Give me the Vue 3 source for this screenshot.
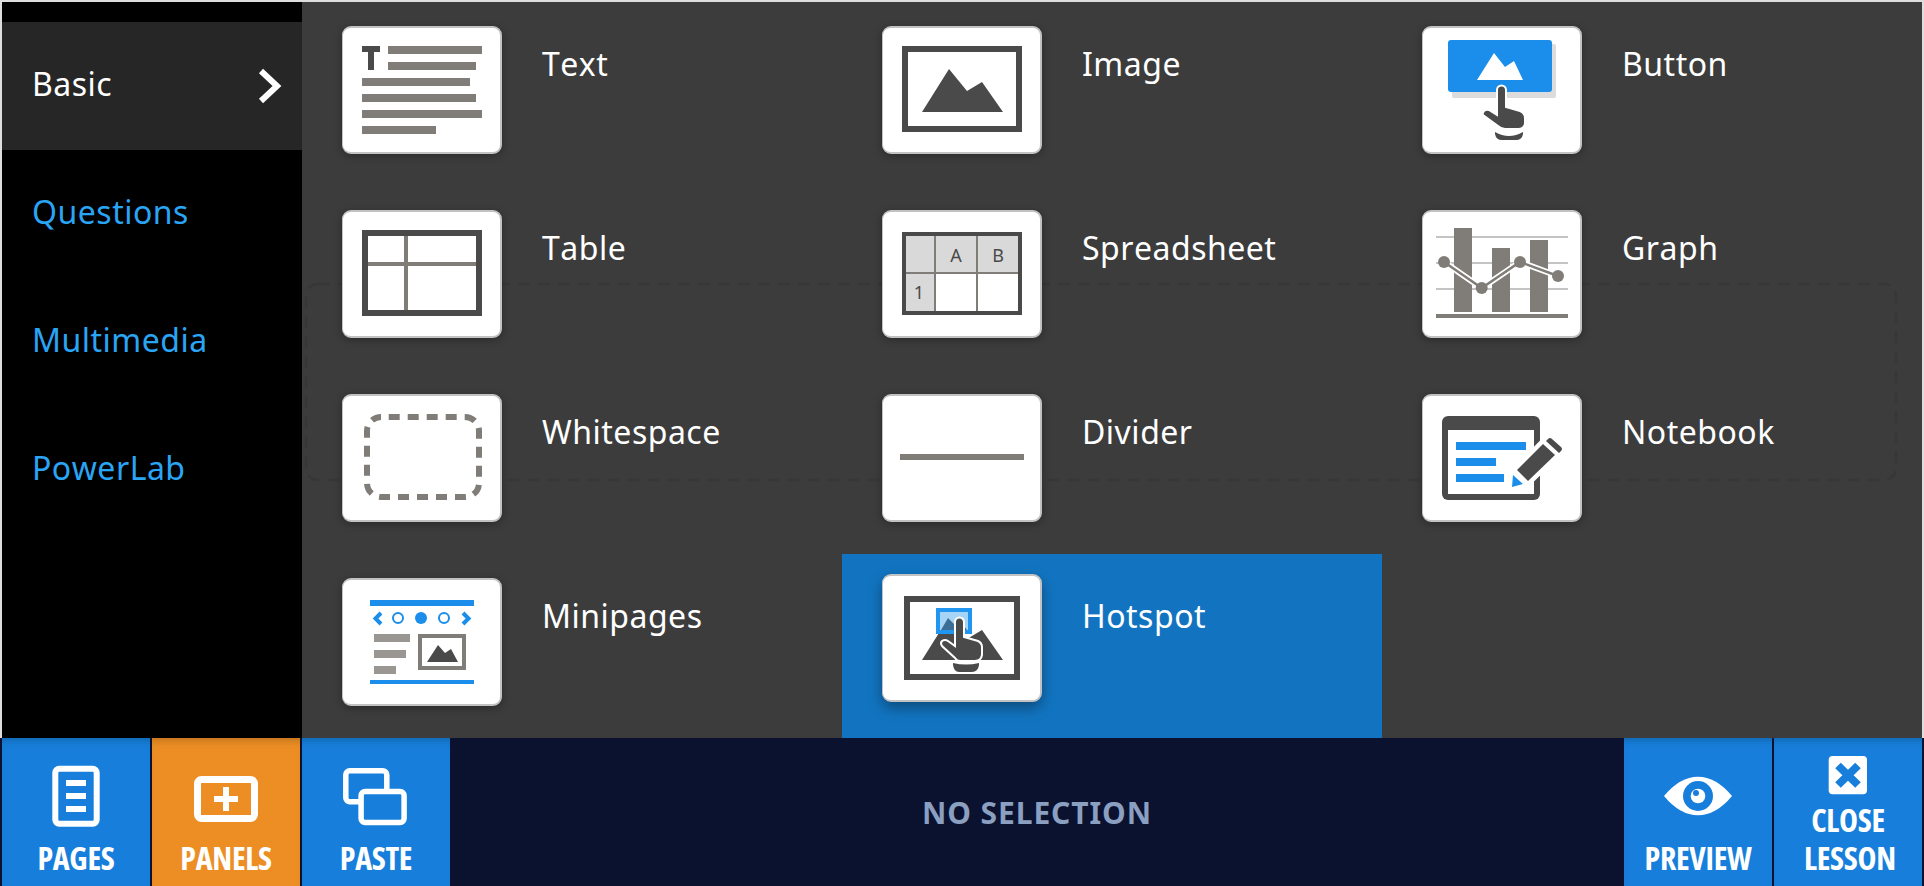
<script setup>
const sideItems = [
  { name: 'Basic', active: true },
  { name: 'Questions' },
  { name: 'Multimedia' },
  { name: 'PowerLab' },
]
</script>

<template>
  <div class="app">
    <div class="main">
      <aside class="sidebar">
        <div v-for="item in sideItems" :key="item.name" class="side-item" :class="{ active: item.active }">
          <span>{{ item.name }}</span>
          <svg v-if="item.active" class="chev" width="24" height="36" viewBox="0 0 24 36">
            <path d="M3 3 L19 18 L3 33" fill="none" stroke="#fff" stroke-width="6" />
          </svg>
        </div>
      </aside>
      <section class="panel">
        <svg class="ghost" width="1600" height="206" viewBox="0 0 1600 206">
          <rect x="4" y="4" width="1590" height="196" rx="12" fill="none" stroke="#373737" stroke-width="2.500" stroke-dasharray="12 8" />
        </svg>

        <div class="cell">
          <div class="card">
            <svg viewBox="0 0 160 128" class="ic">
              <g fill="#807c78">
                <rect x="46" y="20" width="94" height="8" />
                <rect x="46" y="36" width="88" height="8" />
                <rect x="20" y="52" width="108" height="8" />
                <rect x="20" y="68" width="114" height="8" />
                <rect x="20" y="84" width="120" height="8" />
                <rect x="20" y="100" width="74" height="8" />
              </g>
              <path d="M20 20 H38 V26 H32 V44 H26 V26 H20 Z" fill="#4a4a4a" />
            </svg>
          </div>
          <div class="label">Text</div>
        </div>

        <div class="cell">
          <div class="card">
            <svg viewBox="0 0 160 128" class="ic">
              <rect x="23" y="23" width="114" height="80" fill="none" stroke="#4a4a4a" stroke-width="6" />
              <path d="M40 86 L67 43 L85 65 L100 56 L121 86 Z" fill="#4a4a4a" />
            </svg>
          </div>
          <div class="label">Image</div>
        </div>

        <div class="cell">
          <div class="card">
            <svg viewBox="0 0 160 128" class="ic">
              <rect x="30" y="18" width="104" height="54" rx="2" fill="#dcdcdc" />
              <rect x="26" y="14" width="104" height="52" rx="3" fill="#1a8eea" />
              <path d="M55 54 L72 27 L83 41 L92 35 L101 54 Z" fill="#fff" />
              <path d="M75 64 a4.5 4.5 0 0 1 9 0 V81 L98 85 Q103 87 103 92 V97 Q103 102 97 103 H83 Q79 103 76 100 L61 89 Q60 87 62 85 Q64 83 67 84 L75 89 Z" fill="#4a4a4a" stroke="#fff" stroke-width="2" />
              <path d="M73 106 Q80 110 87 110 Q94 110 101 106 V108 Q100 114 94 114 H80 Q74 114 73 108 Z" fill="#4a4a4a" />
            </svg>
          </div>
          <div class="label">Button</div>
        </div>

        <div class="cell">
          <div class="card">
            <svg viewBox="0 0 160 128" class="ic">
              <rect x="62" y="22" width="4" height="82" fill="#807c78" />
              <rect x="22" y="52" width="116" height="4" fill="#807c78" />
              <rect x="23" y="23" width="114" height="80" fill="none" stroke="#4a4a4a" stroke-width="6" />
            </svg>
          </div>
          <div class="label">Table</div>
        </div>

        <div class="cell">
          <div class="card">
            <svg viewBox="0 0 160 128" class="ic">
              <rect x="24" y="26" width="112" height="36" fill="#d9d9d9" />
              <rect x="24" y="62" width="30" height="40" fill="#d9d9d9" />
              <g fill="#807c78">
                <rect x="52" y="26" width="2" height="76" />
                <rect x="94" y="26" width="2" height="76" />
                <rect x="24" y="62" width="112" height="2" />
              </g>
              <rect x="22" y="24" width="116" height="79" fill="none" stroke="#4a4a4a" stroke-width="4" />
              <text x="74" y="52" class="sheet-t">A</text>
              <text x="116" y="52" class="sheet-t">B</text>
              <text x="37" y="89" class="sheet-t">1</text>
            </svg>
          </div>
          <div class="label">Spreadsheet</div>
        </div>

        <div class="cell">
          <div class="card">
            <svg viewBox="0 0 160 128" class="ic">
              <g fill="#c4c4c4">
                <rect x="14" y="26" width="132" height="2" />
                <rect x="14" y="52" width="132" height="2" />
                <rect x="14" y="78" width="132" height="2" />
              </g>
              <rect x="14" y="104" width="132" height="4" fill="#807c78" />
              <g fill="#807c78">
                <rect x="32" y="18" width="18" height="84" />
                <rect x="70" y="38" width="18" height="64" />
                <rect x="108" y="30" width="18" height="72" />
              </g>
              <polyline points="22,52 59.7,78 98,52 136,66" fill="none" stroke="#fff" stroke-width="6" />
              <polyline points="22,52 59.7,78 98,52 136,66" fill="none" stroke="#807c78" stroke-width="2.5" />
              <g fill="#807c78">
                <circle cx="22" cy="52" r="6" />
                <circle cx="59.7" cy="78" r="6" />
                <circle cx="98" cy="52" r="6" />
                <circle cx="136" cy="66" r="6" />
              </g>
            </svg>
          </div>
          <div class="label">Graph</div>
        </div>

        <div class="cell">
          <div class="card">
            <svg viewBox="0 0 160 128" class="ic">
              <rect x="25" y="23" width="112" height="80" rx="14" fill="none" stroke="#807c78" stroke-width="6" stroke-dasharray="11 8" stroke-dashoffset="11.3" />
            </svg>
          </div>
          <div class="label">Whitespace</div>
        </div>

        <div class="cell">
          <div class="card">
            <svg viewBox="0 0 160 128" class="ic">
              <rect x="18" y="60" width="124" height="6" fill="#807c78" />
            </svg>
          </div>
          <div class="label">Divider</div>
        </div>

        <div class="cell">
          <div class="card">
            <svg viewBox="0 0 160 128" class="ic">
              <rect x="20" y="22" width="98" height="84" rx="6" fill="#4a4a4a" />
              <rect x="26" y="36" width="86" height="64" fill="#fff" />
              <g fill="#1a8eea">
                <rect x="34" y="48" width="70" height="8" />
                <rect x="34" y="64" width="40" height="8" />
                <rect x="34" y="80" width="48" height="8" />
              </g>
              <polygon points="95,76 106,87 140,54 128,43" fill="#fff" stroke="#fff" stroke-width="9" stroke-linejoin="round" />
              <polygon points="91,81 101,90 90,93" fill="#1a8eea" />
              <polygon points="95,76 121,50 133,61 106,87" fill="#4a4a4a" />
              <path d="M124 47 L126 45 Q128 43 130 45 L139 53 Q141 55 139 57 L137 59 Z" fill="#4a4a4a" />
            </svg>
          </div>
          <div class="label">Notebook</div>
        </div>

        <div class="cell">
          <div class="card">
            <svg viewBox="0 0 160 128" class="ic">
              <g fill="#1a8eea">
                <rect x="28" y="22" width="104" height="6" />
                <rect x="28" y="102" width="104" height="4" />
                <circle cx="79" cy="40" r="6" />
              </g>
              <g fill="none" stroke="#1a8eea">
                <path d="M39 35 L33.500 40.500 L39 46" stroke-width="4" />
                <path d="M121 35 L126.500 40.500 L121 46" stroke-width="4" />
                <circle cx="56" cy="40" r="5" stroke-width="2" />
                <circle cx="102" cy="40" r="5" stroke-width="2" />
              </g>
              <g fill="#9a9692">
                <rect x="32" y="56" width="36" height="8" />
                <rect x="32" y="72" width="32" height="8" />
                <rect x="32" y="88" width="22" height="8" />
              </g>
              <rect x="78" y="58" width="44" height="32" fill="none" stroke="#807c78" stroke-width="4" />
              <path d="M85 84 L96 67 L103 75 L109 71 L116 84 Z" fill="#4a4a4a" />
            </svg>
          </div>
          <div class="label">Minipages</div>
        </div>

        <div class="cell selected">
          <div class="card">
            <svg viewBox="0 0 160 128" class="ic">
              <rect x="25" y="25" width="110" height="78" fill="none" stroke="#4a4a4a" stroke-width="6" />
              <path d="M40 86 L67 43 L85 65 L100 56 L121 86 Z" fill="#4a4a4a" />
              <rect x="54" y="34" width="36" height="26" fill="#2196f0" />
              <rect x="58" y="38" width="28" height="18" fill="#a6d4f7" />
              <path d="M59 56 L66 44 L72 50 L78 47 L85 56 Z" fill="#3d6d94" />
              <path d="M73 48 a4.500 4.500 0 0 1 9 0 V63 L96 67 Q100 69 100 73 V81 Q99 87 93 87 H78 Q75 87 73 84 L60 72 Q58 69 60 67 Q63 65 66 67 L73 72 Z" fill="#4a4a4a" stroke="#fff" stroke-width="2" />
              <path d="M71 89 Q84 92 97 89 V91 Q96 98 90 98 H77 Q72 98 71 91 Z" fill="#4a4a4a" />
            </svg>
          </div>
          <div class="label">Hotspot</div>
        </div>
      </section>
    </div>

    <footer class="bar">
      <div class="btn">
        <svg class="btn-ic" viewBox="0 0 148 100">
          <rect x="53.300" y="30.700" width="41.400" height="55" rx="4" fill="none" stroke="#fff" stroke-width="6" />
          <g fill="#fff">
            <rect x="64" y="42" width="20" height="6" />
            <rect x="64" y="55" width="20" height="6" />
            <rect x="64" y="68" width="20" height="6" />
          </g>
        </svg>
        <div class="btn-label">PAGES</div>
      </div>
      <div class="btn orange">
        <svg class="btn-ic" viewBox="0 0 148 100">
          <rect x="45.500" y="41.500" width="57" height="39" rx="4" fill="none" stroke="#fff" stroke-width="7" />
          <rect x="62" y="58" width="24" height="6" fill="#fff" />
          <rect x="71" y="49" width="6" height="24" fill="#fff" />
        </svg>
        <div class="btn-label">PANELS</div>
      </div>
      <div class="btn">
        <svg class="btn-ic" viewBox="0 0 148 100">
          <rect x="43.800" y="32.800" width="41" height="31" rx="4" fill="none" stroke="#fff" stroke-width="5.500" />
          <rect x="59.100" y="53.500" width="43" height="31" rx="4" fill="#177fdb" stroke="#fff" stroke-width="5.500" />
        </svg>
        <div class="btn-label">PASTE</div>
      </div>
      <div class="status">NO SELECTION</div>
      <div class="btn">
        <svg class="btn-ic" viewBox="0 0 148 100">
          <path d="M40 58 Q56 38.700 74 38.700 Q92 38.700 108 58 Q92 77.300 74 77.300 Q56 77.300 40 58 Z" fill="#fff" />
          <circle cx="74" cy="58" r="15" fill="#177fdb" />
          <circle cx="74" cy="58" r="7.300" fill="#fff" />
          <circle cx="72" cy="55" r="3" fill="#177fdb" />
        </svg>
        <div class="btn-label">PREVIEW</div>
      </div>
      <div class="btn">
        <svg class="btn-ic short" viewBox="0 0 148 62">
          <rect x="54.700" y="18" width="38.300" height="38.300" rx="4" fill="#fff" />
          <path d="M64 27.500 L84 47 M84 27.500 L64 47" stroke="#177fdb" stroke-width="8" fill="none" />
        </svg>
        <div class="btn-label wrap">CLOSE LESSON</div>
      </div>
    </footer>
  </div>
</template>

<style scoped>
.app {
  width: 1924px;
  height: 886px;
  display: flex;
  flex-direction: column;
  font-family: "Noto Sans", "Open Sans", sans-serif;
  overflow: hidden;
}
.main {
  flex: 1;
  min-height: 0;
  display: flex;
  padding: 2px 2px 0;
  background: #dedede;
}
.sidebar {
  width: 300px;
  flex: none;
  background: #000;
  padding-top: 20px;
  box-sizing: border-box;
}
.side-item {
  height: 128px;
  display: flex;
  align-items: center;
  justify-content: space-between;
  box-sizing: border-box;
  padding: 0 20px 5px 30px;
  font-size: 32px;
  letter-spacing: 0.5px;
  font-kerning: none;
  color: #2aa5f5;
}
.side-item.active {
  background: #262626;
  color: #fff;
}
.chev {
  position: relative;
  top: 2px;
}
.panel {
  flex: 1;
  position: relative;
  isolation: isolate;
  display: grid;
  grid-template-columns: repeat(3, 540px);
  grid-auto-rows: 184px;
  background: #3c3c3c;
}
.ghost {
  position: absolute;
  left: 0;
  top: 278px;
  z-index: -1;
}
.cell {
  display: flex;
  align-items: flex-start;
  padding: 24px 40px;
  box-sizing: border-box;
}
.cell.selected {
  background: #1274c0;
  padding-top: 20px;
}
.card {
  width: 160px;
  height: 128px;
  flex: none;
  box-sizing: border-box;
  background: #fff;
  border: 2px solid #c2c2c2;
  border-left-width: 1px;
  border-radius: 9px;
  box-shadow: 0 2px 8px rgba(0, 0, 0, 0.3);
  overflow: hidden;
  position: relative;
}
.selected .card {
  box-shadow: 0 6px 14px rgba(0, 0, 0, 0.35);
}
.ic {
  position: absolute;
  left: -1px;
  top: -2px;
  width: 160px;
  height: 128px;
  display: block;
}
.label {
  margin: 16px 0 0 40px;
  font-size: 32px;
  line-height: 44px;
  letter-spacing: 0.5px;
  font-kerning: none;
  color: #fff;
}
.selected .label {
  margin-top: 20px;
}
.sheet-t {
  font-family: "Noto Sans", sans-serif;
  font-size: 18px;
  fill: #4a4a4a;
  text-anchor: middle;
}
.bar {
  height: 148px;
  flex: none;
  display: flex;
  gap: 2px;
  padding: 0 2px;
  background: #0a1230;
}
.btn {
  width: 148px;
  flex: none;
  display: flex;
  flex-direction: column;
  background: #177fdb;
  box-shadow: inset 0 8px 8px -6px rgba(0, 0, 0, 0.22);
  color: #fff;
}
.btn.orange {
  background: #ec8e24;
}
.btn-ic {
  display: block;
  width: 148px;
  height: 100px;
  flex: none;
}
.btn-ic.short {
  height: 62px;
}
.btn-label {
  margin-top: auto;
  padding-bottom: 9px;
  text-align: center;
  font-family: "Open Sans", sans-serif;
  font-size: 32px;
  line-height: 38px;
  font-weight: 700;
  font-stretch: 75%;
  letter-spacing: -0.3px;
  white-space: nowrap;
}
.btn-label.wrap {
  padding-left: 30px;
  padding-right: 30px;
  white-space: normal;
}
.status {
  flex: 1;
  display: flex;
  align-items: center;
  justify-content: center;
  font-size: 30px;
  font-weight: 700;
  letter-spacing: 0.9px;
  color: #8b9fc0;
}
</style>

<style>
html, body {
  margin: 0;
  background: #3c3c3c;
}
</style>
